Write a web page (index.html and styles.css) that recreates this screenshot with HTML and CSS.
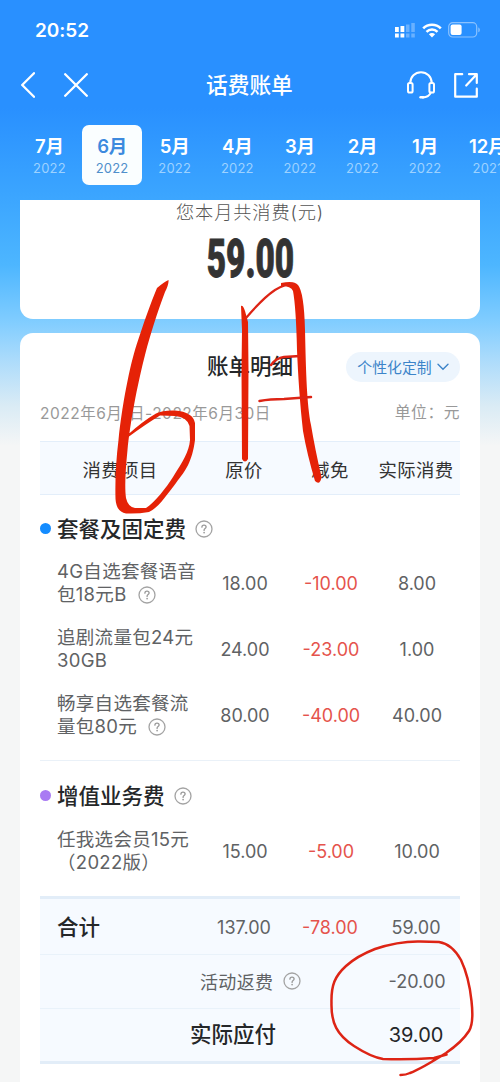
FILE: index.html
```html
<!DOCTYPE html>
<html lang="zh-CN">
<head>
<meta charset="utf-8">
<title>话费账单</title>
<link rel="stylesheet" href="styles.css">
</head>
<body>
<svg class="defs" width="0" height="0" aria-hidden="true">
  <symbol id="help" viewBox="0 0 18 18">
    <circle cx="9" cy="9" r="8" fill="none" stroke="#a3a3a3" stroke-width="1.3"/>
    <path d="M6.9 7.2C6.9 5.9 7.8 5.1 9 5.1s2.1.8 2.1 1.9c0 1.5-2 1.6-2 3.1v.3" fill="none" stroke="#999" stroke-width="1.3" stroke-linecap="round"/>
    <circle cx="9.1" cy="12.6" r=".85" fill="#999"/>
  </symbol>
</svg>
<div class="screen">
  <header class="top">
    <div class="status">
      <span class="time">20:52</span>
      <div class="status-icons">
        <svg width="20" height="15" viewBox="0 0 20 15" fill="#fff">
          <path d="M0 4h3.8v5H0zM5.5 3h3.8v6H5.5zM0 10.6h3.8v4H0zM5.5 10.6h3.8v4H5.5z"/>
          <path opacity=".3" d="M11 1.5h3.5V9H11zM16.3 0h3.5v9h-3.5zM11 10.6h3.5v4H11zM16.3 10.6h3.5v4h-3.5z"/>
        </svg>
        <svg class="wifi" width="20" height="15" viewBox="0 0 20 15" fill="none" stroke="#fff">
          <path stroke-width="2.6" d="M1.2 5.3C6 .5 14 .5 18.8 5.3"/>
          <path stroke-width="2.5" d="M4.5 8.8c3-3 8-3 11 0"/>
          <path fill="#fff" stroke="none" d="M6.9 11.3c1.7-1.6 4.5-1.6 6.2 0L10 14.4z"/>
        </svg>
        <svg width="32" height="16" viewBox="0 0 32 16">
          <rect x=".7" y=".7" width="28" height="14.3" rx="4" fill="none" stroke="#8bc2ff" stroke-width="1.2"/>
          <rect x="2.6" y="2.6" width="11" height="10.5" rx="2" fill="#fff"/>
          <path d="M30.3 5.6c2 .7 2 3.9 0 4.6z" fill="#8bc2ff"/>
        </svg>
      </div>
    </div>
    <div class="nav">
      <svg width="14" height="26" viewBox="0 0 14 26" fill="none" stroke="#fff" stroke-width="2.3" stroke-linecap="round" stroke-linejoin="round"><path d="M13 1.2 1.2 13 13 24.8"/></svg>
      <svg class="close" width="24" height="24" viewBox="0 0 24 24" fill="none" stroke="#fff" stroke-width="2.3" stroke-linecap="round"><path d="M1.2 1.2l21.600 21.600M22.800 1.200 1.200 22.800"/></svg>
      <h1 class="title">话费账单</h1>
      <svg class="service" width="28" height="28" viewBox="0 0 28 28" fill="none" stroke="#fff" stroke-width="2" stroke-linecap="round">
        <path d="M3.300 12C3.300 5.800 8 1.200 14 1.200S24.700 5.800 24.700 12"/>
        <rect x="1" y="12" width="4.600" height="9.600" rx="1.600"/>
        <rect x="22.400" y="12" width="4.600" height="9.600" rx="1.600"/>
        <path d="M23.800 21.600c-1.200 2.800-3.900 4.600-8 4.800"/>
        <path stroke-width="2.600" d="M13.600 26.300h2.600"/>
      </svg>
      <svg width="24" height="25" viewBox="0 0 24 25" fill="none" stroke="#fff" stroke-width="2.200" stroke-linecap="round" stroke-linejoin="round"><path d="M8.200 1.200h-7v22.500h21.600v-8M15 1.200h7.800V10M22.300 1.700 12.200 12.500"/></svg>
    </div>
    <nav class="months">
      <div class="month"><b>7月</b><small>2022</small></div>
      <div class="month active"><b>6月</b><small>2022</small></div>
      <div class="month"><b>5月</b><small>2022</small></div>
      <div class="month"><b>4月</b><small>2022</small></div>
      <div class="month"><b>3月</b><small>2022</small></div>
      <div class="month"><b>2月</b><small>2022</small></div>
      <div class="month"><b>1月</b><small>2022</small></div>
      <div class="month"><b>12月</b><small>2021</small></div>
    </nav>
  </header>

  <section class="card summary">
    <p class="summary-label">您本月共消费(元)</p>
    <p class="summary-total"><span>59.00</span></p>
  </section>

  <section class="card detail">
    <div class="detail-head">
      <h2 class="detail-title">账单明细</h2>
      <div class="custom">个性化定制
        <svg width="12" height="8" viewBox="0 0 12 8" fill="none" stroke="#3c84c9" stroke-width="1.4" stroke-linecap="round"><path d="M1 1.200l5 5 5-5"/></svg>
      </div>
    </div>
    <div class="period"><span>2022年6月1日-2022年6月30日</span><span class="unit">单位：元</span></div>

    <div class="row columns"><span>消费项目</span><span>原价</span><span>减免</span><span>实际消费</span></div>

    <h3 class="group"><i class="dot"></i>套餐及固定费<svg class="help"><use href="#help"/></svg></h3>
    <div class="row item"><span class="name">4G自选套餐语音<br>包18元B<svg class="help"><use href="#help"/></svg></span><span>18.00</span><span class="off">-10.00</span><span>8.00</span></div>
    <div class="row item"><span class="name">追剧流量包24元<br>30GB</span><span>24.00</span><span class="off">-23.00</span><span>1.00</span></div>
    <div class="row item"><span class="name">畅享自选套餐流<br>量包80元<svg class="help"><use href="#help"/></svg></span><span>80.00</span><span class="off">-40.00</span><span>40.00</span></div>

    <h3 class="group second"><i class="dot purple"></i>增值业务费<svg class="help"><use href="#help"/></svg></h3>
    <div class="row item"><span class="name">任我选会员15元<br>（2022版）</span><span>15.00</span><span class="off">-5.00</span><span>10.00</span></div>

    <div class="totals">
      <div class="row sum"><strong>合计</strong><span>137.00</span><span class="off">-78.00</span><span>59.00</span></div>
      <div class="row refund"><span class="wide">活动返费<svg class="help"><use href="#help"/></svg></span><span>-20.00</span></div>
      <div class="row due"><strong class="wide">实际应付</strong><span>39.00</span></div>
    </div>
  </section>

  <svg class="marks" width="500" height="1082" viewBox="0 0 500 1082">
    <g fill="#e52207">
      <path d="M168.500 280Q169 284 165 292C157 313 150 336 145.500 353C137 386 130 424 127.500 450C125.500 470 124.500 487 126 498Q128 507 135 508L146 508C155 502 166 488 173 477C183 461 189 452 190 440L189.500 426Q187 417 175 416L160 415.500Q146 424 129 436.500L128 434.500Q143 421 156 413.500Q163 410 175 410.500Q193 412 195 423L195 440C192 462 186 470 176 483C166 496 158 508 149 512Q138 514 126 513.500C119 512 116 507 115.500 499C115 480 116 460 118.500 440C122 405 130 365 136.500 345C143 325 151 302 157 288Q164 282 168.500 280Z"/>
      <path d="M241 306Q243 305 245 311L248 322L248.500 370L248 459Q245 464 242 459L241.500 370L242 330Z"/>
      <path d="M281 283Q294 280 298 285Q304 292 305 330C306 375 307 404 311 425Q315 449 321.500 477Q320 486 315 481Q307 454 303 431C300 405 298 375 297 350Q296 307 293 291Q291 286 281 286Z"/>
    </g>
    <g fill="none" stroke="#dd2415" stroke-linecap="round" stroke-linejoin="round">
      <path stroke-width="2.200" d="M246 318Q263 298 275 290Q287 283 294 284"/>
      <path stroke-width="2.500" d="M271 365Q276 358 284 357L300 356M259.500 401Q270 399 284 399L311 397"/>
      <path stroke-width="2.500" d="M446.500 1054.500L434 1058Q408 1060 383 1059Q371 1057 354 1046C337 1035 331 1023 331.500 1003C331 985 335 976 346 966Q357 956 375 949Q399 941 420 941.500L439 942Q452 944 461 960Q469 977 471.500 1001Q474 1023 469 1031Q462 1042 446 1053C435 1060 418 1070 410 1073Q406 1075 400.500 1075"/>
    </g>
  </svg>
</div>
</body>
</html>
```

FILE: styles.css
```css
* { box-sizing: border-box; }
body { margin: 0; font-family: Inter, "Noto Sans CJK SC", sans-serif; color: #606264; }
h1, h2, h3, p { margin: 0; }
.defs { position: absolute; }
.screen {
  position: relative;
  width: 500px;
  height: 1082px;
  overflow: hidden;
  background: linear-gradient(#2990ff 0, #2990ff 108px, #3ba5ff 195px, #4db6ff 265px, #81cdff 322px, #aedcfb 362px, #d9ebf5 405px, #f5f6f6 446px);
}
.top { height: 200px; color: #fff; overflow: hidden; }
.status { height: 60px; padding: 0 20px 0 35px; display: flex; align-items: center; justify-content: space-between; }
.time { font-size: 19px; font-weight: 600; letter-spacing: -.05px; }
.status-icons { display: flex; align-items: center; }
.wifi { margin: 0 6px 0 7px; }
.nav { height: 50px; padding: 0 22px 0 21px; display: flex; align-items: center; }
.close { margin-left: 29px; }
.title { flex: 1; margin-left: 118px; font-size: 21.7px; font-weight: 500; line-height: 48px; }
.service { margin-right: 19px; }
.months { display: flex; gap: 2.6px; padding: 15px 0 0 19.5px; width: 540px; }
.month { flex: none; width: 60px; height: 60px; border-radius: 7px; display: flex; flex-direction: column; align-items: center; padding-top: 9px; }
.month b { font-size: 18.5px; line-height: 25px; font-weight: 600; letter-spacing: -.2px; white-space: nowrap; }
.month small { font-size: 13px; line-height: 18px; letter-spacing: .2px; color: #9dd2ff; }
.active { background: #fafeff; color: #3c8ade; }
.month.active small { color: #4f8fcb; }
.card { margin: 0 20px; background: #fff; }
.summary { height: 119px; border-radius: 0 0 13px 13px; text-align: center; }
.summary-label { font-size: 18.2px; line-height: 24px; height: 22px; letter-spacing: .9px; font-weight: 300; color: #555; }
.summary-total { height: 72px; color: #333; font: 900 53px/74px Roboto, sans-serif; }
.summary-total span { display: inline-block; transform: scaleX(.63); -webkit-text-stroke: .9px #333; }
.detail { margin-top: 14px; height: 780px; border-radius: 13px 13px 0 0; padding: 0 20px; }
.detail-head { height: 68px; display: grid; grid-template-columns: 1fr auto 1fr; align-items: center; }
.detail-title { grid-column: 2; font-size: 21.5px; line-height: 32px; padding-bottom: 2px; font-weight: 500; color: #252729; }
.custom { justify-self: end; width: 114px; height: 30px; padding-bottom: 1px; border-radius: 15px; background: #edf5fd; color: #3c84c9; font-size: 14.9px; display: flex; align-items: center; justify-content: center; gap: 5px; }
.period { height: 40px; padding-bottom: 19px; display: flex; align-items: center; justify-content: space-between; font-size: 15.5px; letter-spacing: .5px; color: #999; white-space: nowrap; }
.unit { font-size: 15.8px; }
.row { display: grid; grid-template-columns: 162px 86px 86px 86px; align-items: center; font-size: 18px; text-align: center; }
.columns { height: 54px; padding-top: 1px; background: #f6faff; border: solid #e3eefa; border-width: 1px 0; color: #333; font-size: 18.4px; letter-spacing: .3px; }
.columns span { margin-left: -2px; }
.group { height: 55px; padding-top: 12px; display: flex; align-items: center; font-size: 21.5px; line-height: 30px; font-weight: 500; color: #252729; }
.dot { width: 11px; height: 11px; border-radius: 50%; background: #148cff; margin-right: 6px; }
.purple { background: #a97bf3; }
.help { width: 18px; height: 18px; flex: none; margin-left: 9px; }
.item { height: 66px; }
.name { padding-left: 17px; text-align: left; font-size: 18.5px; line-height: 23px; letter-spacing: .3px; white-space: nowrap; }
.name .help { margin-left: 11px; vertical-align: -3px; }
.off { color: #e5534c; }
.second { margin-top: 12px; border-top: 1px solid #eaf1f8; height: 58px; }
.totals { margin-top: 12px; background: #f6faff; border: solid #e2edf8; border-width: 3px 0; }
.sum { height: 55px; padding-top: 2px; }
.sum strong { padding-left: 17px; text-align: left; font-size: 21.5px; line-height: 30px; padding-bottom: 2px; font-weight: 500; color: #252729; }
.sum span { margin-left: -2px; }
.refund, .due { grid-template-columns: 334px 86px; border-top: 1px solid #e9f2fa; height: 54px; }
.wide { display: flex; align-items: center; justify-content: flex-end; padding-right: 73.5px; letter-spacing: .4px; }
.refund .wide { padding-bottom: 1px; }
.due { height: 53px; color: #252729; font-size: 20px; }
.due .wide { padding-right: 98px; font-size: 21.5px; line-height: 30px; padding-bottom: 2px; font-weight: 500; letter-spacing: 0; }
.due span { margin-left: -2px; }
.marks { position: absolute; left: 0; top: 0; pointer-events: none; }
```
